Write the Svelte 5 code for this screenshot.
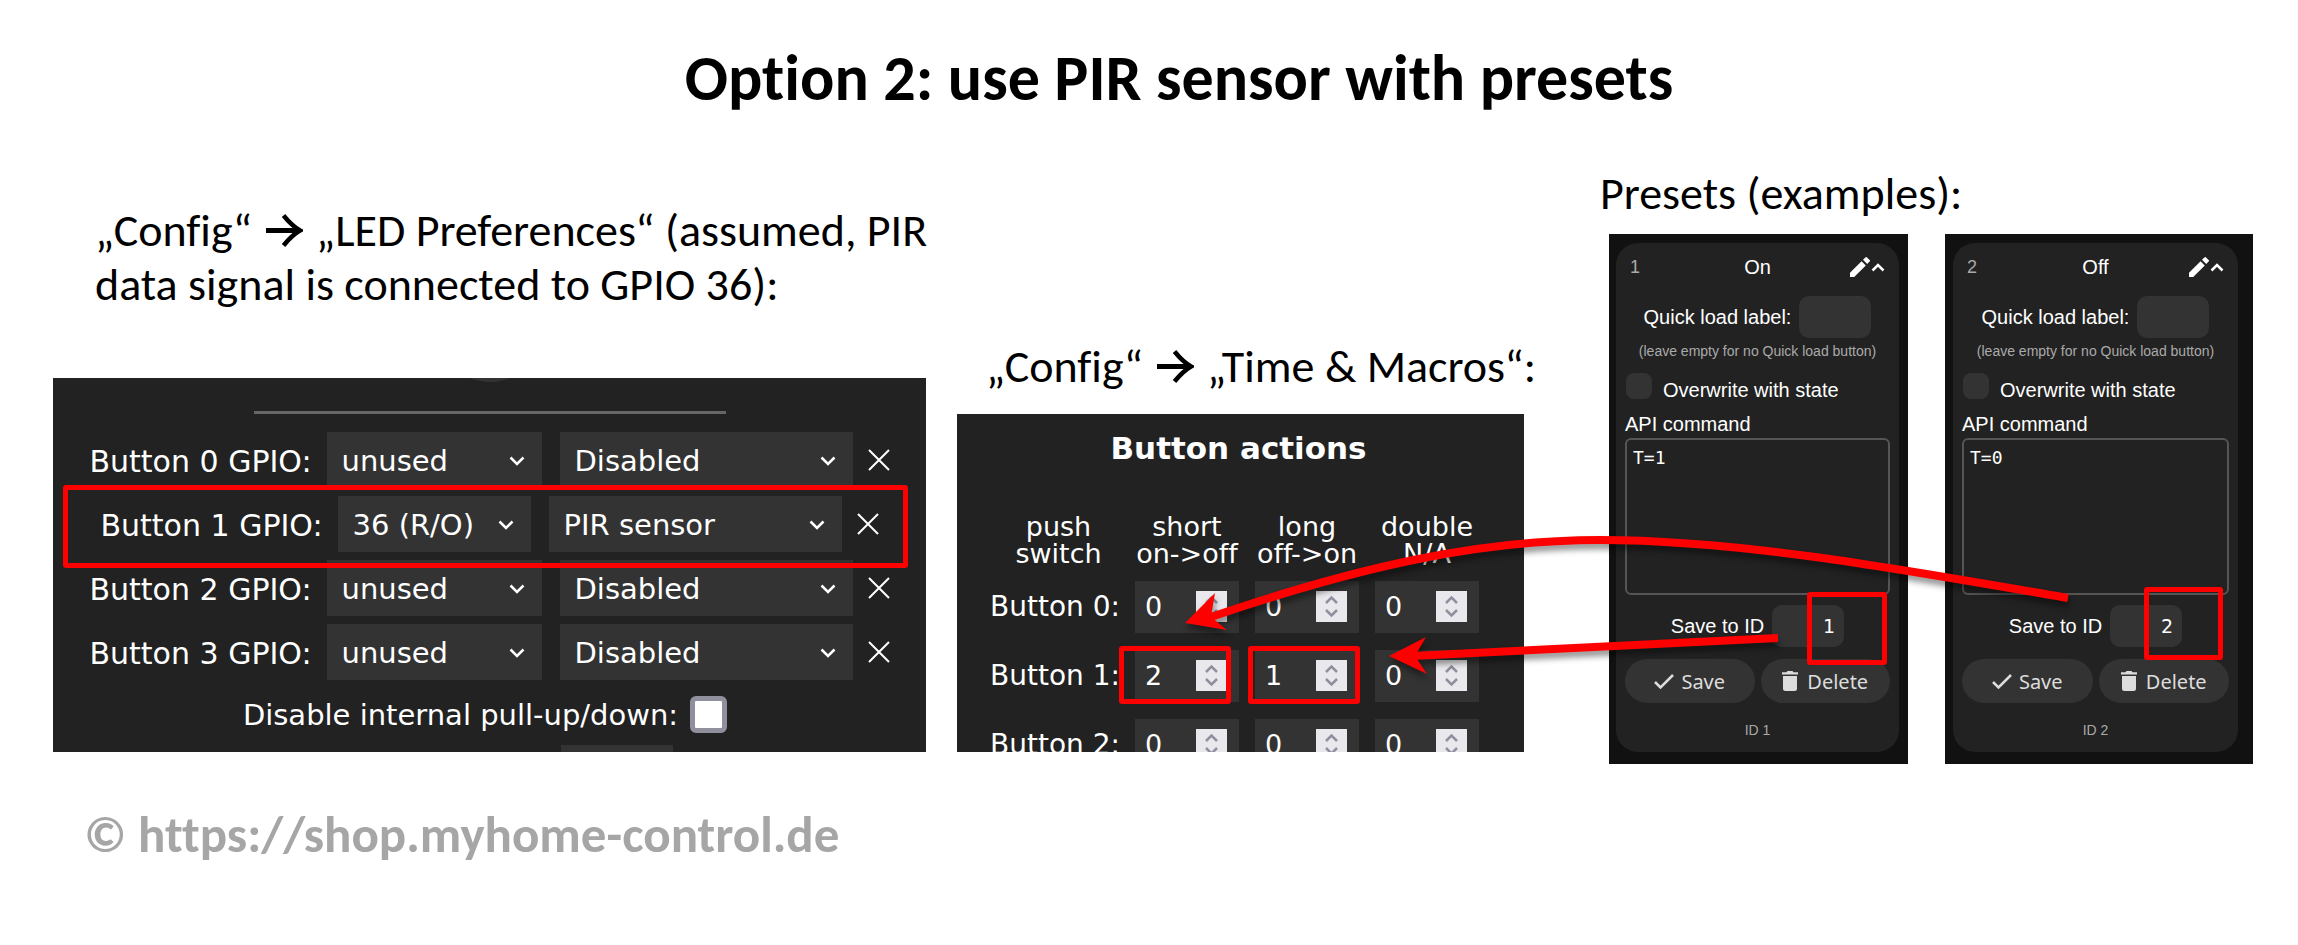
<script>
  const gpioRows = [
    { id: 0, pin: 'unused', mode: 'Disabled' },
    { id: 1, pin: '36 (R/O)', mode: 'PIR sensor', marked: true },
    { id: 2, pin: 'unused', mode: 'Disabled' },
    { id: 3, pin: 'unused', mode: 'Disabled' }
  ];

  const actionHeads = [
    ['push', 'switch'],
    ['short', 'on->off'],
    ['long', 'off->on'],
    ['double', 'N/A']
  ];

  const actionRows = [
    { id: 0, values: [0, 0, 0] },
    { id: 1, values: [2, 1, 0], marked: true },
    { id: 2, values: [0, 0, 0] }
  ];

  const presets = [
    { id: 1, name: 'On', command: 'T=1' },
    { id: 2, name: 'Off', command: 'T=0' }
  ];
</script>

{#snippet arrow()}
  <svg class="arrow" viewBox="0 0 37 33" aria-hidden="true">
    <path d="M0 16.5H33" stroke-width="5" />
    <path d="M17.500 1.500C22 7 27 12.500 34 16.500C27 20.500 22 26 17.500 31.500" stroke-width="4.500" />
  </svg>
{/snippet}

{#snippet dropdown(value, label, size)}
  <span class="dropdown {size}">
    <select aria-label={label}>
      <option>{value}</option>
    </select>
    <svg viewBox="0 0 16 10" aria-hidden="true"><path d="M1.500 1.500L8 8L14.500 1.500" /></svg>
  </span>
{/snippet}

<main class="slide">
  <h1>Option 2: use PIR sensor with presets</h1>

  <div class="columns">
    <section class="step">
      <h2>„Config“ {@render arrow()} „LED Preferences“ (assumed, PIR<br />data signal is connected to GPIO 36):</h2>
      <div class="panel led">
        <span class="knob"></span>
        <hr />
        {#each gpioRows as row}
          <div class="gpio" class:marked={row.marked}>
            <span class="caption">Button {row.id} GPIO:</span>
            {@render dropdown(row.pin, `Button ${row.id} GPIO`, row.marked ? 'pin-narrow' : 'pin')}
            {@render dropdown(row.mode, `Button ${row.id} type`, 'mode')}
            <button class="clear" aria-label="Clear button {row.id}">
              <svg viewBox="0 0 22 22" aria-hidden="true"><path d="M1 1L21 21M21 1L1 21" /></svg>
            </button>
          </div>
        {/each}
        <label class="pull">
          Disable internal pull-up/down:
          <input type="checkbox" />
        </label>
        <span class="next-field"></span>
      </div>
    </section>

    <section class="step macros">
      <h2>„Config“ {@render arrow()} „Time &amp; Macros“:</h2>
      <div class="panel actions">
        <h3>Button actions</h3>
        <table>
          <thead>
            <tr>
              {#each actionHeads as [top, bottom]}
                <th scope="col">{top}<br />{bottom}</th>
              {/each}
            </tr>
          </thead>
          <tbody>
            {#each actionRows as row}
              <tr>
                <th scope="row">Button {row.id}:</th>
                {#each row.values as value, i}
                  <td>
                    <span class="number">
                      <input type="number" {value} aria-label="Button {row.id} {actionHeads[i + 1][0]}" />
                      <svg viewBox="0 0 31 31" aria-hidden="true">
                        <path d="M10 12L15.500 6.500L21 12M10 19L15.500 24.500L21 19" />
                      </svg>
                      {#if row.marked && value > 0}
                        <i class="mark" class:wide={i === 0}></i>
                      {/if}
                    </span>
                  </td>
                {/each}
              </tr>
            {/each}
          </tbody>
        </table>
      </div>
    </section>

    <section class="presets">
      <h2>Presets (examples):</h2>
      <div class="pair">
        {#each presets as preset}
          <div class="preset" class:second={preset.id === 2}>
            <div class="card">
              <header>
                <span class="num">{preset.id}</span>
                <span>{preset.name}</span>
                <span class="icons">
                  <svg class="pencil" viewBox="0 0 20 20" aria-hidden="true">
                    <path d="M0 15.800V20H4.200L15.800 8.400L11.600 4.200ZM19.600 4.600a1.100 1.100 0 0 0 0-1.600L17 0.400a1.100 1.100 0 0 0-1.600 0L13 2.800L17.200 7Z" />
                  </svg>
                  <svg class="caret" viewBox="0 0 14 9" aria-hidden="true"><path d="M1.500 7.500L7 2L12.500 7.500" /></svg>
                </span>
              </header>
              <label class="line">
                Quick load label:
                <input type="text" />
              </label>
              <p class="hint">(leave empty for no Quick load button)</p>
              <label class="overwrite">
                <input type="checkbox" />
                <span>Overwrite with state</span>
              </label>
              <label class="api">
                <span>API command</span>
                <textarea value={preset.command}></textarea>
              </label>
              <div class="line save-id">
                <label for="save-{preset.id}">Save to ID</label>
                <span class="target">
                  <input id="save-{preset.id}" type="text" value={preset.id} />
                  <i class="mark"></i>
                </span>
              </div>
              <div class="buttons">
                <button>
                  <svg class="check" viewBox="0 0 20 15" aria-hidden="true"><path d="M1 8L6.500 13.500L19 1" /></svg>
                  Save
                </button>
                <button>
                  <svg class="bin" viewBox="0 0 16 20" aria-hidden="true">
                    <path d="M1 5H15V17.500a2.500 2.500 0 0 1-2.500 2.500H3.500A2.500 2.500 0 0 1 1 17.500ZM0 1.200H4.500L5.500 0H10.500L11.500 1.200H16V3.500H0Z" />
                  </svg>
                  Delete
                </button>
              </div>
              <p class="id">ID {preset.id}</p>
            </div>
          </div>
        {/each}
      </div>
    </section>
  </div>

  <footer>© <a href="https://shop.myhome-control.de">https://shop.myhome-control.de</a></footer>

  <svg class="links" viewBox="0 0 2298 945" preserveAspectRatio="none" aria-hidden="true">
    <g>
      <path class="shaft" d="M2068 598C1900 569 1740 540 1600 540C1480 540 1360 566 1208 618" />
      <path class="head" d="M1185 623L1215 593L1211 617L1227 630Z" />
    </g>
    <g>
      <path class="shaft" d="M1778 638L1412 656" />
      <path class="head" d="M1389 656L1426 637L1415 656L1427 674Z" />
    </g>
  </svg>
</main>

<style>
  :global(body) {
    margin: 0;
    background: #fff;
  }

  * {
    box-sizing: border-box;
  }

  .slide {
    position: relative;
    min-height: 945px;
    padding: 0 45px 0 53px;
    font-family: Carlito, Lato, sans-serif;
    font-variant-ligatures: none;
    color: #000;
    overflow: hidden;
  }

  h1,
  h2,
  h3,
  p {
    margin: 0;
  }

  h1 {
    padding: 40px 0 50px 52px;
    font-size: 64px;
    line-height: 76px;
    font-weight: 700;
    text-align: center;
  }

  h2 {
    font-size: 46px;
    line-height: 54px;
    font-weight: 400;
    white-space: nowrap;
  }

  .columns {
    display: grid;
    grid-template-columns: 873fr 567fr 698fr;
    column-gap: 31px;
    align-items: end;
  }

  .step {
    min-width: 0;
    padding-bottom: 12px;
  }

  .step h2 {
    padding: 0 0 67px 42px;
  }

  .macros h2 {
    padding: 0 0 21px 29px;
  }

  .arrow {
    width: 37px;
    height: 33px;
    margin: 0 3px;
    vertical-align: -1px;
    fill: none;
    stroke: #000;
  }

  .panel {
    position: relative;
    overflow: hidden;
    background: #222;
    color: #fff;
    font-family: "DejaVu Sans", Verdana, sans-serif;
  }

  .led {
    height: 374px;
    font-size: 29px;
  }

  .knob {
    position: absolute;
    top: -96px;
    left: calc(50% - 50px);
    width: 100px;
    height: 100px;
    border-radius: 50px;
    background: #333;
  }

  hr {
    width: 472px;
    height: 3px;
    margin: 33px auto 18px;
    border: 0;
    background: #666;
  }

  .gpio {
    position: relative;
    display: flex;
    justify-content: center;
    align-items: center;
    height: 56px;
    margin-bottom: 8px;
    white-space: nowrap;
  }

  .gpio.marked::after {
    content: "";
    position: absolute;
    z-index: 1;
    inset: -11px 18px -16px 10px;
    border: 5px solid #f00;
    border-radius: 3px;
  }

  .caption {
    padding-top: 3px;
    font-size: 30px;
  }

  .dropdown {
    position: relative;
    height: 56px;
    margin-left: 15px;
  }

  .dropdown select {
    width: 100%;
    height: 100%;
    padding: 2px 0 0 15px;
    border: 0;
    border-radius: 0;
    appearance: none;
    background: #333;
    color: #fff;
    font: inherit;
  }

  .dropdown svg {
    position: absolute;
    top: 24px;
    right: 17px;
    width: 16px;
    height: 10px;
    fill: none;
    stroke: #fff;
    stroke-width: 2.5;
    pointer-events: none;
  }

  .pin {
    width: 215px;
  }

  .pin-narrow {
    width: 193px;
  }

  .mode {
    width: 293px;
    margin-left: 18px;
  }

  .clear {
    display: flex;
    margin: 0 0 0 15px;
    padding: 0;
    border: 0;
    background: none;
  }

  .clear svg {
    width: 22px;
    height: 22px;
    stroke: #fff;
    stroke-width: 2;
  }

  .pull {
    display: flex;
    justify-content: center;
    align-items: center;
    gap: 12px;
    height: 37px;
    margin-top: 16px;
    padding-right: 9px;
    white-space: nowrap;
  }

  .pull input {
    width: 37px;
    height: 37px;
    margin: 0;
    appearance: none;
    border: 5px solid #8f8f9d;
    border-radius: 6px;
    background: #fff;
  }

  .next-field {
    position: absolute;
    bottom: 0;
    left: 508px;
    width: 112px;
    height: 7px;
    background: #333;
  }

  .actions {
    height: 338px;
    padding: 14px 4px 0 0;
  }

  h3 {
    margin-bottom: 45px;
    font-size: 31px;
    line-height: 40px;
    text-align: center;
  }

  table {
    margin: 0 auto;
    border-collapse: collapse;
  }

  th,
  td {
    width: 120px;
    padding: 0;
    font-weight: 400;
    text-align: center;
  }

  thead th {
    height: 59px;
    vertical-align: top;
    font-size: 27px;
    line-height: 27px;
  }

  th:first-child {
    width: 137px;
  }

  tbody th {
    font-size: 28px;
    text-align: left;
    white-space: nowrap;
  }

  tbody tr {
    height: 69px;
  }

  .number {
    position: relative;
    display: block;
    width: 104px;
    height: 52px;
    margin: 0 auto;
  }

  .number input {
    width: 100%;
    height: 100%;
    padding: 0 0 0 10px;
    border: 0;
    appearance: textfield;
    background: #333;
    color: #fff;
    font: 27px "DejaVu Sans", Verdana, sans-serif;
  }

  .number input::-webkit-inner-spin-button {
    display: none;
  }

  .number svg {
    position: absolute;
    top: 10px;
    right: 12px;
    width: 31px;
    height: 31px;
    background: #e9e9ed;
    fill: none;
    stroke: #8f8f9d;
    stroke-width: 2.5;
  }

  .mark {
    position: absolute;
    z-index: 1;
    inset: -4px -1px -2px -7px;
    border: 5px solid #f00;
    border-radius: 3px;
  }

  .mark.wide {
    inset: -4px 8px -2px -16px;
  }

  .presets {
    padding-left: 54px;
  }

  .presets h2 {
    margin: 0 0 14px -9px;
  }

  .pair {
    display: grid;
    grid-template-columns: 299fr 308fr;
    column-gap: 37px;
    color: #fff;
    font: 20px/26px "Liberation Sans", Arial, sans-serif;
  }

  .preset {
    padding: 9px 9px 12px 7px;
    background: #111;
  }

  .preset.second {
    padding: 9px 15px 12px 8px;
  }

  .card {
    padding: 10px 9px 12px;
    border-radius: 22px;
    background: #222;
    white-space: nowrap;
  }

  .card header {
    display: grid;
    grid-template-columns: 1fr auto 1fr;
    align-items: center;
    height: 28px;
    padding: 0 5px;
    margin-bottom: 15px;
  }

  .num {
    color: #aaa;
    font-size: 18px;
  }

  .icons {
    display: flex;
    justify-content: flex-end;
    align-items: center;
    gap: 1px;
  }

  .pencil {
    width: 20px;
    height: 20px;
    fill: #fff;
  }

  .caret {
    width: 14px;
    height: 9px;
    fill: none;
    stroke: #fff;
    stroke-width: 2.5;
  }

  .line {
    display: flex;
    justify-content: center;
    align-items: center;
    gap: 8px;
  }

  .line input {
    display: block;
    width: 72px;
    height: 42px;
    padding: 0 9px;
    border: 0;
    border-radius: 10px;
    background: #333;
    color: #fff;
    font: 19px "DejaVu Sans", Verdana, sans-serif;
    text-align: right;
  }

  .hint,
  .id {
    color: #aaa;
    font-size: 14px;
    line-height: 20px;
    text-align: center;
  }

  .hint {
    margin: 3px 0 12px;
  }

  .overwrite {
    display: flex;
    gap: 11px;
    margin-bottom: 8px;
  }

  .overwrite span {
    padding-top: 4px;
  }

  .overwrite input {
    width: 26px;
    height: 26px;
    margin: 0 0 0 1px;
    appearance: none;
    border-radius: 8px;
    background: #333;
  }

  .api span {
    display: block;
    margin-bottom: 1px;
  }

  textarea {
    display: block;
    width: 100%;
    height: 157px;
    padding: 7px 6px;
    border: 2px solid #555;
    border-radius: 6px;
    resize: none;
    background: #222;
    color: #fff;
    font: 18px/22px "DejaVu Sans Mono", monospace;
  }

  .save-id {
    margin: 10px 0 12px;
  }

  .target {
    position: relative;
  }

  .target .mark {
    inset: -13px -43px -18px 35px;
  }

  .second .target .mark {
    inset: -18px -41px -13px 34px;
  }

  .buttons {
    display: flex;
    gap: 6px;
    margin-bottom: 17px;
  }

  .buttons button {
    display: flex;
    flex: 1;
    justify-content: center;
    align-items: center;
    height: 44px;
    padding: 0;
    border: 0;
    border-radius: 22px;
    background: #333;
    color: #ddd;
    font: 20px "Noto Sans", Tahoma, sans-serif;
  }

  .check {
    width: 20px;
    height: 15px;
    margin-right: 7px;
    fill: none;
    stroke: #ddd;
    stroke-width: 2.5;
  }

  .bin {
    width: 16px;
    height: 20px;
    margin-right: 9px;
    fill: #ddd;
  }

  footer {
    padding: 40px 31px 0;
    font-size: 51px;
    line-height: 62px;
    font-weight: 700;
    color: #a6a6a6;
  }

  footer a {
    color: inherit;
    text-decoration: none;
  }

  .links {
    position: absolute;
    z-index: 2;
    inset: 0;
    width: 100%;
    height: 945px;
    pointer-events: none;
  }

  .links g {
    filter: drop-shadow(1px 5px 3px rgba(0, 0, 0, 0.45));
  }

  .shaft {
    fill: none;
    stroke: #f00;
    stroke-width: 8;
  }

  .head {
    fill: #f00;
  }
</style>
